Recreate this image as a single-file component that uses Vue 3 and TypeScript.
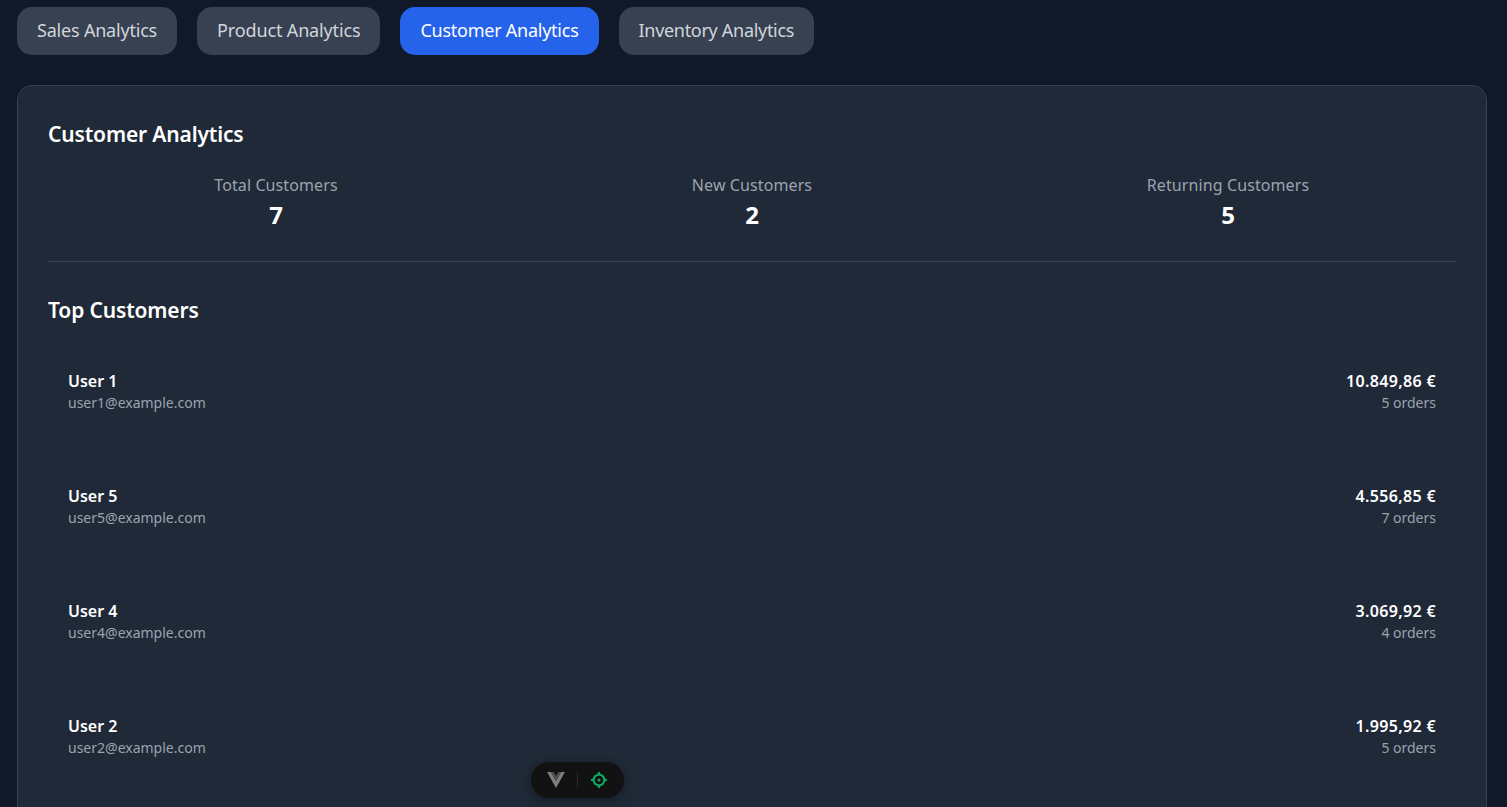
<script setup lang="ts">
interface Customer {
  name: string
  email: string
  total: string
  orders: number
}

const tabs = ["Sales Analytics", "Product Analytics", "Customer Analytics", "Inventory Analytics"]
const activeTab = "Customer Analytics"

const stats = [
  {label: "Total Customers", value: 7},
  {label: "New Customers", value: 2},
  {label: "Returning Customers", value: 5},
]

const customers: Customer[] = [
  {name: "User 1", email: "user1@example.com", total: "10.849,86 €", orders: 5},
  {name: "User 5", email: "user5@example.com", total: "4.556,85 €", orders: 7},
  {name: "User 4", email: "user4@example.com", total: "3.069,92 €", orders: 4},
  {name: "User 2", email: "user2@example.com", total: "1.995,92 €", orders: 5},
]
</script>

<template>
  <div class="page">
    <nav class="tabs">
      <button v-for="tab in tabs" :key="tab" class="tab" :class="{active: tab === activeTab}">{{ tab }}</button>
    </nav>

    <section class="card">
      <h2 class="title">Customer Analytics</h2>
      <div class="stats">
        <div v-for="stat in stats" :key="stat.label" class="stat">
          <div class="stat-label">{{ stat.label }}</div>
          <div class="stat-value">{{ stat.value }}</div>
        </div>
      </div>

      <h3 class="subtitle">Top Customers</h3>
      <ul class="customers">
        <li v-for="customer in customers" :key="customer.email" class="customer">
          <div>
            <div class="primary">{{ customer.name }}</div>
            <div class="secondary">{{ customer.email }}</div>
          </div>
          <div class="right">
            <div class="primary amount">{{ customer.total }}</div>
            <div class="secondary">{{ customer.orders }} orders</div>
          </div>
        </li>
      </ul>
    </section>

    <div class="devtools">
      <svg class="vue-logo" width="18" height="16" viewBox="0 0 18 16">
        <path d="M0 0H4L9 8.8L14 0H18L9 16Z" fill="#7d7d7d" />
        <path d="M4 0H6.8L9 3.9L11.2 0H14L9 8.8Z" fill="#4d4d4d" />
      </svg>
      <span class="sep"></span>
      <svg class="target" width="18" height="18" viewBox="0 0 18 18" fill="none" stroke="#0ea763" stroke-width="2.2">
        <circle cx="9" cy="9" r="5.4" />
        <circle cx="9" cy="9" r="1.5" fill="#0ea763" stroke="none" />
        <path d="M9 1V3.5M9 14.5V17M1 9H3.5M14.5 9H17" />
      </svg>
    </div>
  </div>
</template>

<style>
html,
body {
  margin: 0;
  background: #111827;
}
</style>

<style scoped>
.page {
  box-sizing: border-box;
  height: 807px;
  padding: 7px 20px 0 17px;
  overflow: hidden;
  position: relative;
  background: #111827;
  font-family: "Noto Sans", sans-serif;
}

.tabs {
  display: flex;
  gap: 20px;
  margin-bottom: 30px;
}

.tab {
  height: 48px;
  padding: 0 20px 2px;
  border: none;
  border-radius: 15px;
  background: #374151;
  color: #d1d5db;
  font: inherit;
  font-size: 18px;
  letter-spacing: -0.2px;
}

.tab:nth-child(2) {
  letter-spacing: -0.14px;
}

.tab:nth-child(3) {
  letter-spacing: -0.25px;
}

.tab:nth-child(4) {
  letter-spacing: -0.3px;
}

.tab.active {
  background: #2563eb;
  color: #fff;
}

.card {
  box-sizing: border-box;
  height: 800px;
  padding: 30px;
  border: 1px solid #374151;
  border-radius: 15px;
  background: #1f2937;
}

.title,
.subtitle {
  margin: 0;
  color: #fff;
  font-size: 21px;
  font-weight: 600;
  line-height: 36px;
  letter-spacing: -0.15px;
}

.stats {
  display: grid;
  grid-template-columns: repeat(3, 1fr);
  gap: 20px;
  margin-top: 21px;
  padding-bottom: 28px;
  border-bottom: 1px solid #374151;
  text-align: center;
}

.stat-label {
  color: #9ca3af;
  font-size: 16px;
  line-height: 24px;
  letter-spacing: 0.1px;
}

.stat-value {
  color: #fff;
  font-size: 24px;
  font-weight: 700;
  line-height: 36px;
}

.subtitle {
  margin-top: 30px;
}

.customers {
  margin: 21px 0 0;
  padding: 0;
  list-style: none;
}

.customer {
  display: flex;
  justify-content: space-between;
  height: 115px;
  box-sizing: border-box;
  padding: 20px;
}

.right {
  text-align: right;
}

.primary {
  color: #fff;
  font-size: 16px;
  font-weight: 600;
  line-height: 24px;
}

.amount {
  letter-spacing: 0.35px;
}

.secondary {
  color: #9ca3af;
  font-size: 14px;
  line-height: 20px;
}

.devtools {
  position: absolute;
  left: 531px;
  top: 762px;
  box-sizing: border-box;
  width: 93px;
  height: 36px;
  display: flex;
  align-items: center;
  padding-left: 16px;
  border-radius: 18px;
  background: #121212;
  box-shadow: 0 2px 10px rgba(0, 0, 0, 0.35);
}

.sep {
  width: 1px;
  height: 14px;
  margin: 0 12px;
  background: #2b2b2b;
}
</style>
